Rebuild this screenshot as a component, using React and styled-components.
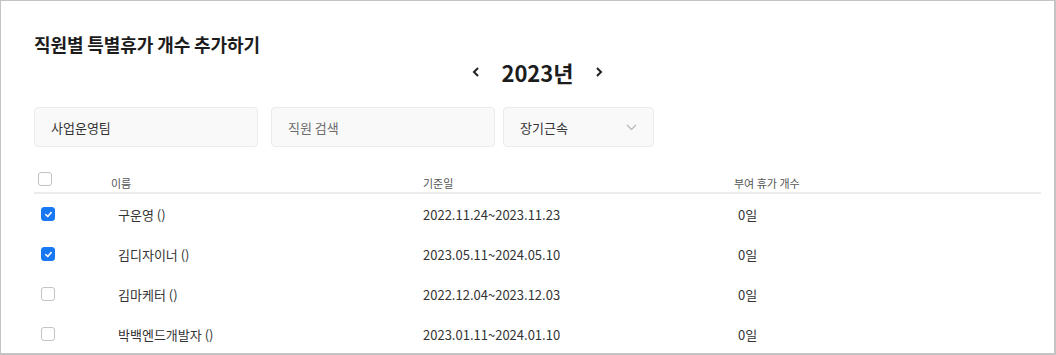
import React from "react";
import styled, { createGlobalStyle } from "styled-components";

const GlobalStyle = createGlobalStyle`
  html, body {
    margin: 0;
    padding: 0;
    background: #ffffff;
  }
  body {
    font-family: "Noto Sans CJK KR", "Noto Sans", sans-serif;
    color: #222;
  }
  * {
    box-sizing: border-box;
  }
`;

const employees = [
  { name: "구운영 ()", period: "2022.11.24~2023.11.23", count: "0일", checked: true },
  { name: "김디자이너 ()", period: "2023.05.11~2024.05.10", count: "0일", checked: true },
  { name: "김마케터 ()", period: "2022.12.04~2023.12.03", count: "0일", checked: false },
  { name: "박백엔드개발자 ()", period: "2023.01.11~2024.01.10", count: "0일", checked: false },
];

function CheckBox({ checked, offset }) {
  return (
    <StyledCheck checked={checked} offset={offset}>
      {checked && (
        <svg width="9" height="9" viewBox="0 0 10 10">
          <polyline
            points="2,5.2 4.2,7.2 8,2.8"
            fill="none"
            stroke="#fff"
            strokeWidth="1.8"
            strokeLinecap="round"
            strokeLinejoin="round"
          />
        </svg>
      )}
    </StyledCheck>
  );
}

export default function App() {
  return (
    <>
      <GlobalStyle />
      <StyledFrame>
        <StyledTitle>직원별 특별휴가 개수 추가하기</StyledTitle>

        <StyledYearNav>
          <StyledArrow aria-label="이전 연도">
            <svg width="8" height="12" viewBox="0 0 8 12">
              <polyline points="6,2 2,6 6,10" fill="none" stroke="#222" strokeWidth="2" />
            </svg>
          </StyledArrow>
          <StyledYear>2023년</StyledYear>
          <StyledArrow aria-label="다음 연도">
            <svg width="8" height="12" viewBox="0 0 8 12">
              <polyline points="2,2 6,6 2,10" fill="none" stroke="#222" strokeWidth="2" />
            </svg>
          </StyledArrow>
        </StyledYearNav>

        <StyledFilters>
          <StyledField width="224px">사업운영팀</StyledField>
          <StyledField width="224px" placeholder>
            직원 검색
          </StyledField>
          <StyledField width="151px">
            장기근속
            <svg width="11" height="7" viewBox="0 0 11 7">
              <polyline points="1,1 5.5,5.5 10,1" fill="none" stroke="#b5b5b5" strokeWidth="1.2" />
            </svg>
          </StyledField>
        </StyledFilters>

        <StyledTable>
          <StyledHeadRow>
            <StyledHeadCell>
              <CheckBox checked={false} offset="4px" />
            </StyledHeadCell>
            <StyledHeadCell>이름</StyledHeadCell>
            <StyledHeadCell>기준일</StyledHeadCell>
            <StyledHeadCell>부여 휴가 개수</StyledHeadCell>
          </StyledHeadRow>

          {employees.map((employee) => (
            <StyledRow key={employee.name}>
              <StyledCell>
                <CheckBox checked={employee.checked} offset="7px" />
              </StyledCell>
              <StyledCell indent="7px">{employee.name}</StyledCell>
              <StyledCell>{employee.period}</StyledCell>
              <StyledCell indent="4px">{employee.count}</StyledCell>
            </StyledRow>
          ))}
        </StyledTable>
      </StyledFrame>
    </>
  );
}

const StyledFrame = styled.div`
  width: 1056px;
  height: 355px;
  overflow: hidden;
  border: 1px solid #c4c4c4;
  border-right-width: 2px;
  border-bottom-width: 2px;
  padding: 30px 13px 0 33px;
`;

const StyledTitle = styled.h1`
  margin: 0;
  font-size: 18px;
  line-height: 26px;
  font-weight: 700;
  color: #1c1c1c;
  letter-spacing: -0.1px;
`;

const StyledYearNav = styled.div`
  display: flex;
  align-items: center;
  justify-content: center;
  gap: 20px;
  height: 30px;
`;

const StyledArrow = styled.button`
  display: flex;
  align-items: center;
  justify-content: center;
  width: 10px;
  height: 14px;
  padding: 0;
  border: none;
  background: none;
  cursor: pointer;
`;

const StyledYear = styled.div`
  font-size: 22px;
  line-height: 30px;
  font-weight: 700;
  color: #1c1c1c;
`;

const StyledFilters = styled.div`
  display: flex;
  gap: 13px;
  margin-top: 20px;

  & > :last-child {
    margin-left: -5px;
  }
`;

const StyledField = styled.div`
  display: flex;
  align-items: center;
  justify-content: space-between;
  width: ${({ width }) => width};
  height: 40px;
  padding: 0 16px 0 16px;
  background: #f9f9f9;
  border: 1px solid #ebebeb;
  border-radius: 4px;
  font-size: 13px;
  color: ${({ placeholder }) => (placeholder ? "#6b6b6b" : "#333")};
`;

const StyledTable = styled.div`
  margin-top: 20px;
`;

const StyledHeadRow = styled.div`
  display: grid;
  grid-template-columns: 77px 312px 311px 1fr;
  align-items: end;
  height: 27px;
  padding-bottom: 1px;
  border-bottom: 2px solid #ececec;
`;

const StyledHeadCell = styled.div`
  font-size: 11px;
  line-height: 16px;
  color: #555;
  display: flex;
  align-items: center;

  &:first-child {
    align-self: start;
    margin-top: 5px;
  }
`;

const StyledRow = styled.div`
  display: grid;
  grid-template-columns: 77px 312px 311px 1fr;
  align-items: center;
  height: 40px;
`;

const StyledCell = styled.div`
  display: flex;
  align-items: center;
  padding-left: ${({ indent }) => indent || "0"};
  font-size: 13px;
  color: #333;
`;

const StyledCheck = styled.span`
  display: inline-flex;
  align-items: center;
  justify-content: center;
  width: 14px;
  height: 14px;
  margin-left: ${({ offset }) => offset};
  border-radius: 3px;
  background: ${({ checked }) => (checked ? "#1877f2" : "#fff")};
  border: 1px solid ${({ checked }) => (checked ? "#1877f2" : "#c3c3c3")};
`;
